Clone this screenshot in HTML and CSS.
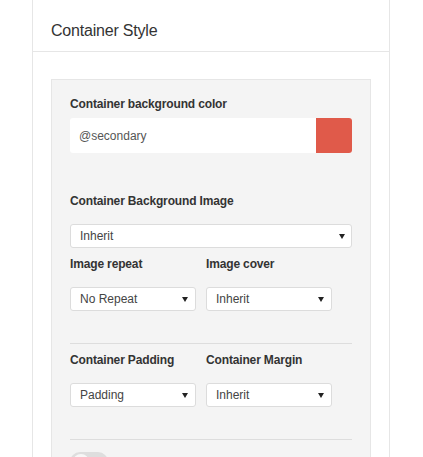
FILE: index.html
```html
<!DOCTYPE html>
<html>
<head>
<meta charset="utf-8">
<link rel="stylesheet" href="styles.css">
</head>
<body>
<div class="panel">
  <div class="panel-header">Container Style</div>
  <div class="panel-body">
    <div class="box">
      <div class="label first">Container background color</div>
      <div class="color-input">
        <span class="color-text">@secondary</span>
        <span class="swatch"></span>
      </div>

      <div class="label gap-lg">Container Background Image</div>
      <div class="select full">
        <span>Inherit</span>
        <svg class="arrow" width="6" height="5" viewBox="0 0 6 5"><path d="M0 0H6L3 5Z" fill="#222"/></svg>
      </div>

      <div class="row">
        <div class="col">
          <div class="label gap-sm">Image repeat</div>
          <div class="select">
            <span>No Repeat</span>
            <svg class="arrow" width="6" height="5" viewBox="0 0 6 5"><path d="M0 0H6L3 5Z" fill="#222"/></svg>
          </div>
        </div>
        <div class="col">
          <div class="label gap-sm">Image cover</div>
          <div class="select">
            <span>Inherit</span>
            <svg class="arrow" width="6" height="5" viewBox="0 0 6 5"><path d="M0 0H6L3 5Z" fill="#222"/></svg>
          </div>
        </div>
      </div>

      <hr class="divider">

      <div class="row">
        <div class="col">
          <div class="label gap-sm">Container Padding</div>
          <div class="select">
            <span>Padding</span>
            <svg class="arrow" width="6" height="5" viewBox="0 0 6 5"><path d="M0 0H6L3 5Z" fill="#222"/></svg>
          </div>
        </div>
        <div class="col">
          <div class="label gap-sm">Container Margin</div>
          <div class="select">
            <span>Inherit</span>
            <svg class="arrow" width="6" height="5" viewBox="0 0 6 5"><path d="M0 0H6L3 5Z" fill="#222"/></svg>
          </div>
        </div>
      </div>

      <hr class="divider">

      <div class="toggle"><span class="knob"></span></div>
    </div>
  </div>
</div>
</body>
</html>
```

FILE: styles.css
```css
html, body {
  margin: 0;
  padding: 0;
  background: #ffffff;
  height: 100%;
  overflow: hidden;
}
body {
  font-family: "Liberation Sans", Arial, sans-serif;
  color: #333333;
}
.panel {
  margin-left: 32px;
  width: 358px;
  box-sizing: border-box;
  min-height: 100%;
  border-left: 1px solid #e6e6e6;
  border-right: 1px solid #e6e6e6;
  background: #ffffff;
}
.panel-header {
  font-size: 16px;
  line-height: 20px;
  padding: 21px 18px 10px 18px;
  border-bottom: 1px solid #e6e6e6;
  color: #333333;
  letter-spacing: -0.2px;
}
.panel-body {
  padding: 27px 18px 0 18px;
}
.box {
  background: #f4f4f4;
  border: 1px solid #e6e6e6;
  border-bottom: none;
  padding: 17px 18px 40px 18px;
  min-height: 400px;
}
.label {
  font-size: 12px;
  line-height: 14px;
  font-weight: bold;
  color: #333333;
  letter-spacing: -0.15px;
  margin-bottom: 16px;
}
.label.first {
  margin-bottom: 7px;
}
.label.gap-lg {
  margin-top: 41px;
}
.label.gap-sm {
  margin-top: 9px;
}
.color-input {
  display: flex;
  height: 35px;
  background: #ffffff;
  border-radius: 3px;
}
.color-text {
  flex: 1;
  display: flex;
  align-items: center;
  padding-left: 9px;
  font-size: 12px;
  color: #555555;
}
.swatch {
  width: 36px;
  background: #e05a4a;
  border-radius: 0 3px 3px 0;
}
.select {
  display: flex;
  align-items: center;
  justify-content: space-between;
  box-sizing: border-box;
  width: 126px;
  height: 24px;
  background: #ffffff;
  border: 1px solid #dcdcdc;
  border-radius: 3px;
  padding: 0 7px 0 9px;
  font-size: 12px;
  color: #444444;
}
.select.full {
  width: 100%;
  padding-right: 6px;
}
.arrow {
  display: block;
  flex: none;
}
.row {
  display: flex;
  gap: 10px;
}
.col {
  display: flex;
  flex-direction: column;
}
.divider {
  border: none;
  border-top: 1px solid #dddddd;
  margin: 32px 0 0 0;
  height: 0;
}
.toggle {
  margin-top: 12px;
  width: 38px;
  height: 20px;
  border-radius: 10px;
  background: #dedede;
  display: flex;
  align-items: center;
  padding-left: 3px;
  box-sizing: border-box;
}
.knob {
  width: 16px;
  height: 16px;
  border-radius: 50%;
  background: #f7f7f7;
}
```
